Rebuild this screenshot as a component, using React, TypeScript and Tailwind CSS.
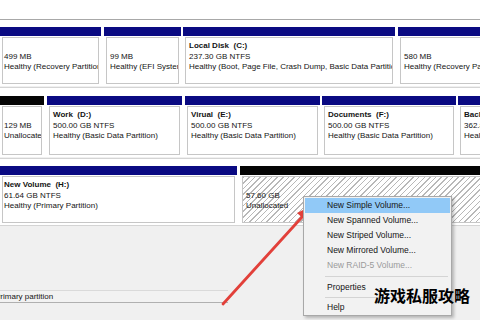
import React from "react";

type Part = {
  w: string;
  ml: string;
  head: "blue" | "black";
  lines: [string, string, string];
  hatch?: boolean;
  first?: boolean;
};

const row1: Part[] = [
  { w: "w-[101px]", ml: "ml-0", head: "blue", lines: ["", "499 MB", "Healthy (Recovery Partition)"], first: true },
  { w: "w-[77px]", ml: "ml-[3px]", head: "blue", lines: ["", "99 MB", "Healthy (EFI System Partition)"] },
  { w: "w-[212px]", ml: "ml-[2px]", head: "blue", lines: ["Local Disk  (C:)", "237.30 GB NTFS", "Healthy (Boot, Page File, Crash Dump, Basic Data Partition)"] },
  { w: "w-[100px]", ml: "ml-[3px]", head: "blue", lines: ["", "580 MB", "Healthy (Recovery Partition)"] },
];

const row2: Part[] = [
  { w: "w-[44px]", ml: "ml-0", head: "black", lines: ["", "129 MB", "Unallocated"], first: true },
  { w: "w-[135px]", ml: "ml-[3px]", head: "blue", lines: ["Work  (D:)", "500.00 GB NTFS", "Healthy (Basic Data Partition)"] },
  { w: "w-[135px]", ml: "ml-[3px]", head: "blue", lines: ["Virual  (E:)", "500.00 GB NTFS", "Healthy (Basic Data Partition)"] },
  { w: "w-[134px]", ml: "ml-[2px]", head: "blue", lines: ["Documents  (F:)", "500.00 GB NTFS", "Healthy (Basic Data Partition)"] },
  { w: "w-[60px]", ml: "ml-[2px]", head: "blue", lines: ["Backup  (G:)", "362.87 GB NTFS", "Healthy (Basic Data Partition)"] },
];

const row3: Part[] = [
  { w: "w-[237px]", ml: "ml-0", head: "blue", lines: ["New Volume  (H:)", "61.64 GB NTFS", "Healthy (Primary Partition)"], first: true },
  { w: "w-[245px]", ml: "ml-[3px]", head: "black", lines: ["", "57.60 GB", "Unallocated"], hatch: true },
];

function Partition({ p, bodyH }: { p: Part; bodyH: string }) {
  return (
    <div className={`${p.w} ${p.ml} shrink-0 flex flex-col`}>
      <div className={`h-[9px] ${p.head === "blue" ? "bg-[#0a0a82]" : "bg-[#050505]"}`} />
      <div className={`${bodyH} bg-white p-[2px] pt-[1px]`}>
        <div
          className={`h-full border border-[#c6c6c6] overflow-hidden ${p.first ? "pl-[1px]" : "pl-[3px]"} pt-[3px] ${
            p.hatch
              ? "bg-[repeating-linear-gradient(135deg,#b8b8b8_0px,#b8b8b8_1px,#ffffff_1px,#ffffff_4px)]"
              : "bg-white"
          }`}
        >
          <div className="whitespace-pre leading-[10.5px] h-[10.5px] font-bold">{p.lines[0]}</div>
          <div className="whitespace-pre leading-[10.5px] h-[10.5px]">{p.lines[1]}</div>
          <div className="whitespace-pre leading-[10.5px] h-[10.5px]">{p.lines[2]}</div>
        </div>
      </div>
    </div>
  );
}

const menuItems = [
  { t: "New Simple Volume...", hi: true },
  { t: "New Spanned Volume..." },
  { t: "New Striped Volume..." },
  { t: "New Mirrored Volume..." },
  { t: "New RAID-5 Volume...", dis: true },
];

export default function App() {
  return (
    <div className="relative w-[480px] h-[320px] overflow-hidden bg-[#f0f0f0] text-[8px] text-[#141414] font-['Liberation_Sans',Arial,sans-serif]">
      <div className="h-[20px] bg-white border-b border-[#a8a8a8]" />
      {/* row 1 */}
      <div className="bg-white pt-[7px] border-b border-[#d4d4d4]">
        <div className="flex">
          {row1.map((p, i) => (
            <Partition key={i} p={p} bodyH="h-[50px]" />
          ))}
        </div>
        <div className="h-[1px] bg-[#f0f0f0]" />
      </div>
      {/* row 2 */}
      <div className="bg-white pt-[8px] border-b border-[#d4d4d4]">
        <div className="flex">
          {row2.map((p, i) => (
            <Partition key={i} p={p} bodyH="h-[52px]" />
          ))}
        </div>
        <div className="h-[1px] bg-[#f0f0f0]" />
      </div>
      {/* row 3 */}
      <div className="bg-white pt-[7px] border-b border-[#d4d4d4]">
        <div className="flex">
          {row3.map((p, i) => (
            <Partition key={i} p={p} bodyH="h-[50px]" />
          ))}
        </div>
      </div>
      {/* legend */}
      <div className="mt-[64px] w-[228px] h-[13px] border-t border-[#dadada] border-b border-b-[#b0b0b0] bg-[#f2f2f2] flex items-center">
        <span className="ml-[-5px] whitespace-pre">Primary partition</span>
      </div>

      {/* arrow */}
      <svg className="absolute left-0 top-0" width="480" height="320" viewBox="0 0 480 320">
        <line x1="223" y1="304" x2="303" y2="216" stroke="#e2403a" strokeWidth="2.8" strokeLinecap="round" />
        <polygon points="313,205 307,222 297,213" fill="#e2403a" />
      </svg>

      {/* context menu */}
      <div className="absolute left-[303px] top-[196px] w-[149px] h-[120px] bg-[#f2f2f2] border border-[#a8a8a8] shadow-[2px_2px_3px_rgba(0,0,0,0.25)] pt-[1px] px-[1px] text-[8.5px]">
        {menuItems.map((m, i) => (
          <div
            key={i}
            className={`h-[15px] flex items-center pl-[22px] whitespace-pre ${m.hi ? "bg-[#91c9f7]" : ""} ${
              m.dis ? "text-[#9a9a9a]" : "text-[#141414]"
            }`}
          >
            {m.t}
          </div>
        ))}
        <div className="h-[7px] flex items-center pl-[20px] pr-[2px]">
          <div className="h-[1px] w-full bg-[#d4d4d4]" />
        </div>
        <div className="h-[14px] flex items-center pl-[22px]">Properties</div>
        <div className="h-[6px] flex items-center pl-[20px] pr-[2px]">
          <div className="h-[1px] w-full bg-[#d4d4d4]" />
        </div>
        <div className="h-[14px] flex items-center pl-[22px]">Help</div>
      </div>

      {/* watermark */}
      <div className="absolute left-[374px] top-[285px] text-[16px] leading-[20px] font-bold text-black whitespace-pre font-['Noto_Sans_CJK_SC',sans-serif]">
        游戏私服攻略
      </div>
    </div>
  );
}
